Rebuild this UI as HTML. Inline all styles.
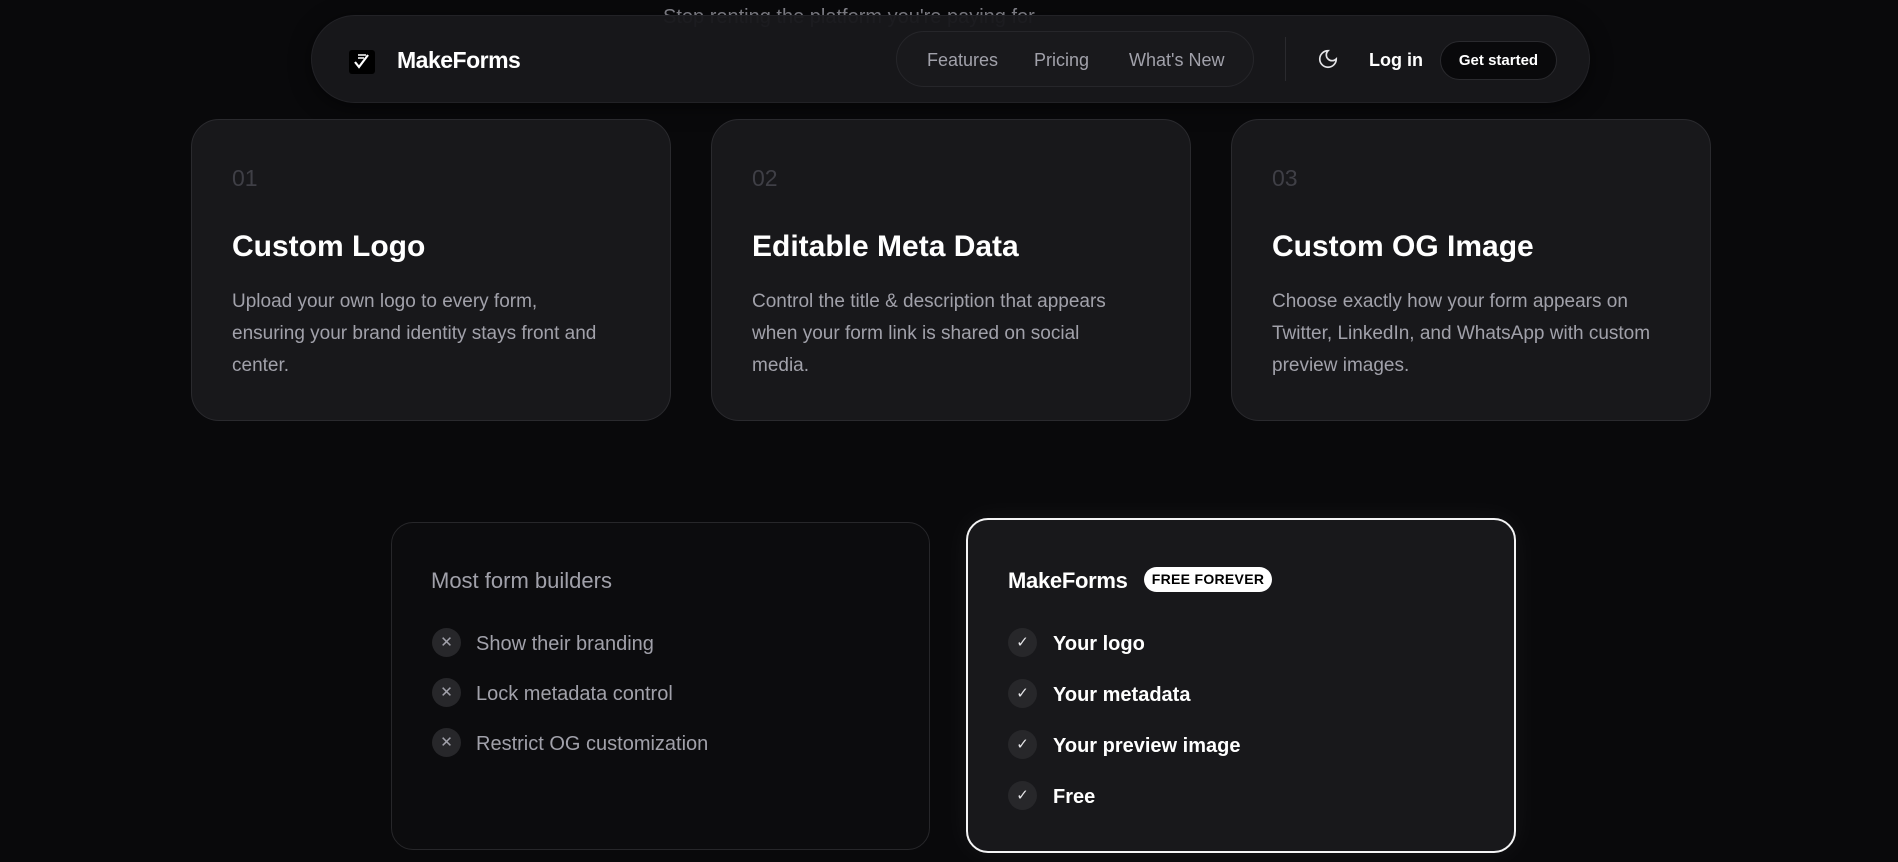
<!DOCTYPE html>
<html><head><meta charset="utf-8"><style>
*{box-sizing:border-box;margin:0;padding:0}
body{width:1898px;height:862px;overflow:hidden;background:#09090b;font-family:"Liberation Sans",sans-serif;position:relative;color:#fff}
.abs{position:absolute}
.top{left:663px;top:6px;font-size:20px;color:#8a8a92;white-space:nowrap}
.nav{left:311px;top:15px;width:1279px;height:88px;border-radius:44px;background:rgba(24,24,27,0.96);border:1px solid #222226;box-shadow:0 4px 20px rgba(0,0,0,.5)}
.links{left:896px;top:31px;width:358px;height:56px;border-radius:28px;border:1px solid #26262a;background:#19191c}
.nl{font-size:18px;color:#a1a1aa;top:50px}
.card{background:#18181b;border:1px solid #2a2a2e;border-radius:28px;width:480px;height:302px;top:119px}
.num{position:absolute;left:40px;top:45px;font-size:23px;color:#3f3f46}
.tt{position:absolute;left:40px;top:110px;font-size:30px;font-weight:bold;color:#fff}
.ds{position:absolute;left:40px;top:166px;width:430px;font-size:19px;line-height:32px;color:#a1a1aa;white-space:nowrap}
.circ{position:absolute;width:29px;height:29px;border-radius:50%;background:#27272a;color:#a1a1aa;font-size:15px;text-align:center;line-height:29px}
.it{position:absolute;font-size:20px}
</style></head><body>
<div class="abs top">Stop renting the platform you're paying for</div>
<div class="abs nav"></div>
<svg class="abs" style="left:349px;top:50px" width="26" height="24" viewBox="0 0 26 24"><rect width="26" height="24" rx="3" fill="#000"/><path d="M6 12l4 5 9-12" stroke="#fff" stroke-width="2.2" fill="none"/><path d="M9 5h8M9 8h6" stroke="#fff" stroke-width="1.6"/></svg>
<div class="abs" style="left:397px;top:47px;font-size:23px;font-weight:bold;letter-spacing:-0.5px">MakeForms</div>
<div class="abs links"></div>
<div class="abs nl" style="left:927px">Features</div>
<div class="abs nl" style="left:1034px">Pricing</div>
<div class="abs nl" style="left:1129px">What's New</div>
<div class="abs" style="left:1285px;top:37px;width:1px;height:44px;background:#2a2a2e"></div>
<svg class="abs" style="left:1317px;top:48px" width="22" height="22" viewBox="0 0 24 24"><path d="M12 3a6 6 0 0 0 9 9 9 9 0 1 1-9-9z" stroke="#e4e4e7" stroke-width="1.8" fill="none"/></svg>
<div class="abs" style="left:1369px;top:50px;font-size:18px;font-weight:bold">Log in</div>
<div class="abs" style="left:1440px;top:41px;width:117px;height:39px;border-radius:20px;background:#09090b;border:1px solid #2a2a2e;font-size:15px;font-weight:bold;text-align:center;line-height:37px">Get started</div>

<div class="abs card" style="left:191px"><div class="num">01</div><div class="tt">Custom Logo</div><div class="ds">Upload your own logo to every form,<br>ensuring your brand identity stays front and<br>center.</div></div>
<div class="abs card" style="left:711px"><div class="num">02</div><div class="tt">Editable Meta Data</div><div class="ds">Control the title &amp; description that appears<br>when your form link is shared on social<br>media.</div></div>
<div class="abs card" style="left:1231px"><div class="num">03</div><div class="tt">Custom OG Image</div><div class="ds">Choose exactly how your form appears on<br>Twitter, LinkedIn, and WhatsApp with custom<br>preview images.</div></div>

<div class="abs" style="left:391px;top:522px;width:539px;height:328px;border-radius:22px;background:#0c0c0e;border:1px solid #27272a"></div>
<div class="abs" style="left:431px;top:568px;font-size:22px;color:#a1a1aa">Most form builders</div>
<div class="circ" style="left:432px;top:628px">✕</div><div class="it" style="left:476px;top:633px;color:#a1a1aa">Show their branding</div>
<div class="circ" style="left:432px;top:678px">✕</div><div class="it" style="left:476px;top:683px;color:#a1a1aa">Lock metadata control</div>
<div class="circ" style="left:432px;top:728px">✕</div><div class="it" style="left:476px;top:733px;color:#a1a1aa">Restrict OG customization</div>

<div class="abs" style="left:966px;top:518px;width:550px;height:335px;border-radius:22px;background:#18181b;border:2px solid #f4f4f5;box-shadow:0 0 30px rgba(255,255,255,.05)"></div>
<div class="abs" style="left:1008px;top:568px;font-size:22px;font-weight:bold;letter-spacing:-0.3px">MakeForms</div>
<div class="abs" style="left:1144px;top:567px;width:128px;height:25px;border-radius:13px;background:#fff;color:#000;font-size:14px;font-weight:bold;text-align:center;line-height:25px;letter-spacing:.3px">FREE FOREVER</div>
<div class="circ" style="left:1008px;top:628px;color:#e4e4e7">✓</div><div class="it" style="left:1053px;top:633px;font-weight:bold">Your logo</div>
<div class="circ" style="left:1008px;top:679px;color:#e4e4e7">✓</div><div class="it" style="left:1053px;top:684px;font-weight:bold">Your metadata</div>
<div class="circ" style="left:1008px;top:730px;color:#e4e4e7">✓</div><div class="it" style="left:1053px;top:735px;font-weight:bold">Your preview image</div>
<div class="circ" style="left:1008px;top:781px;color:#e4e4e7">✓</div><div class="it" style="left:1053px;top:786px;font-weight:bold">Free</div>
</body></html>
